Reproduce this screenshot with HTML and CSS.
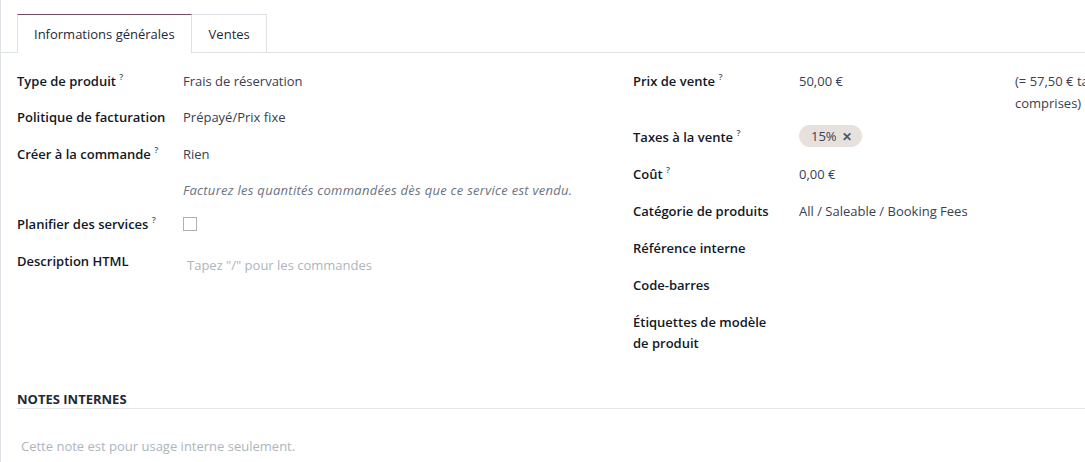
FILE: index.html
```html
<!DOCTYPE html>
<html lang="fr">
<head>
<meta charset="utf-8">
<link rel="stylesheet" href="styles.css">
</head>
<body>
<div class="sheet">
  <div class="tabs">
    <div class="tab active">Informations générales</div>
    <div class="tab">Ventes</div>
  </div>
  <div class="groups">
    <div class="group left">
      <div class="row r36"><div class="lbl">Type de produit <sup>?</sup></div><div class="val">Frais de réservation</div></div>
      <div class="row"><div class="lbl">Politique de facturation</div><div class="val">Prépayé/Prix fixe</div></div>
      <div class="row r36"><div class="lbl">Créer à la commande <sup>?</sup></div><div class="val">Rien</div></div>
      <div class="row r34"><div class="lbl"></div><div class="val hint">Facturez les quantités commandées dès que ce service est vendu.</div></div>
      <div class="row"><div class="lbl">Planifier des services <sup>?</sup></div><div class="val"><span class="check"></span></div></div>
      <div class="row"><div class="lbl">Description HTML</div><div class="val ph">Tapez "/" pour les commandes</div></div>
    </div>
    <div class="group right">
      <div class="row r56"><div class="lbl">Prix de vente <sup>?</sup></div><div class="val">50,00 €</div><div class="extra">(= 57,50 € taxes<br>comprises)</div></div>
      <div class="row"><div class="lbl">Taxes à la vente <sup>?</sup></div><div class="val"><span class="tag">15% <span class="x">✕</span></span></div></div>
      <div class="row"><div class="lbl">Coût <sup>?</sup></div><div class="val">0,00 €</div></div>
      <div class="row"><div class="lbl">Catégorie de produits</div><div class="val">All / Saleable / Booking Fees</div></div>
      <div class="row"><div class="lbl">Référence interne</div><div class="val"></div></div>
      <div class="row"><div class="lbl">Code-barres</div><div class="val"></div></div>
      <div class="row r44"><div class="lbl">Étiquettes de modèle de produit</div><div class="val"></div></div>
    </div>
  </div>
  <div class="notes">
    <div class="notes-title">NOTES INTERNES</div>
    <div class="notes-ph">Cette note est pour usage interne seulement.</div>
  </div>
</div>
</body>
</html>
```
FILE: styles.css
```css
html, body { margin: 0; padding: 0; background: #fff; overflow: hidden; }
body { font-family: "Open Sans", "Noto Sans", sans-serif; font-size: 13px; color: #374151; }
.sheet { width: 1260px; border-left: 1px solid #dee2e6; min-height: 462px; }
.tabs { display: flex; padding: 14px 0 0 16px; border-bottom: 1px solid #dee2e6; height: 38px; box-sizing: content-box; }
.tab { height: 38px; box-sizing: border-box; padding: 0 16px; display: flex; align-items: center; border: 1px solid #dee2e6; border-bottom: none; color: #1f2937; margin-bottom: -1px; background: #fff; }
.tab.active { border-top-color: #714b67; padding-bottom: 1px; height: 39px; }
.tab + .tab { border-left: none; padding: 0 16px 0 17px; }
.groups { display: grid; grid-template-columns: 616px 1fr; padding-top: 16px; align-items: start; }
.group { padding-left: 16px; }
.row { display: flex; height: 37px; align-items: flex-start; }
.row.r36 { height: 36px; }
.row.r34 { height: 34px; }
.row.r56 { height: 56px; }
.row.r44 { height: 44px; }
.lbl { width: 166px; flex: none; font-weight: 600; color: #111827; line-height: 21px; padding-top: 2px; box-sizing: border-box; padding-right: 18px; }
.left .lbl { white-space: nowrap; padding-right: 0; }
.val { width: 216px; flex: none; line-height: 21px; padding-top: 2px; }
.extra { line-height: 22px; padding-top: 1px; white-space: nowrap; }
sup { font-size: 9px; font-weight: 600; vertical-align: 6px; line-height: 0; color: #4b5563; }
.hint { font-style: italic; color: #6b7280; width: auto; letter-spacing: 0.28px; }
.ph { color: #adb5bd; padding-left: 4px; padding-top: 6px; width: auto; }
.check { display: block; width: 12px; height: 12px; border: 1px solid #b0b0b0; margin-top: 3px; }
.val .tag { display: inline-flex; align-items: center; gap: 5px; background: #e7e1de; border-radius: 11px; height: 22px; padding: 0 10px 0 12px; color: #374151; vertical-align: top; margin-top: -2px; }
.x { font-size: 12px; font-weight: 700; color: #555; }
.notes { padding: 0 0 0 16px; margin-top: 36px; }
.notes-title { font-weight: 700; color: #1f2937; font-size: 13px; line-height: 18px; border-bottom: 1px solid #e5e7eb; }
.notes-ph { color: #adb5bd; margin-top: 27px; line-height: 20px; padding-left: 4px; }
```
